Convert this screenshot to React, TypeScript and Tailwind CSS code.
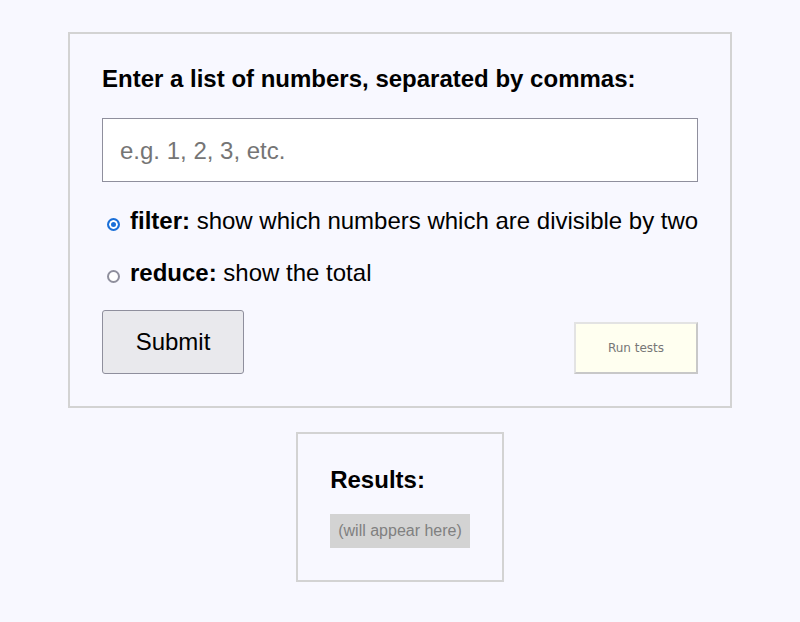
import { useState } from "react";

export default function App() {
  const [mode, setMode] = useState("filter");

  return (
    <div className="min-h-[622px] bg-[#f8f8ff] pt-8 font-['Liberation_Sans',Arial,sans-serif] text-black">
      <div className="mx-auto w-[664px] border-2 border-[#d3d3d3] p-8">
        <h2 className="text-2xl leading-[26px] font-bold">
          Enter a list of numbers, separated by commas:
        </h2>
        <input
          type="text"
          placeholder="e.g. 1, 2, 3, etc."
          className="mt-[26px] block h-16 w-full border border-[#8f8f9d] bg-white px-[17px] pt-[2px] text-2xl placeholder:text-[#757575] outline-none"
        />
        <div className="mt-[25px] flex items-start text-2xl leading-[28px]">
          <input
            type="radio"
            name="mode"
            checked={mode === "filter"}
            onChange={() => setMode("filter")}
            className="mt-[11px] mr-[3px] ml-[5px] size-[13px] shrink-0 appearance-none rounded-full border-2 border-[#8f8f9d] bg-white checked:border-[#1a6fd8] checked:bg-[#1a6fd8] checked:shadow-[inset_0_0_0_2px_white]"
          />
          <label className="ml-[7px] shrink-0 whitespace-nowrap">
            <b>filter:</b> show which numbers which are divisible by two
          </label>
        </div>
        <div className="mt-[24px] flex items-start text-2xl leading-[28px]">
          <input
            type="radio"
            name="mode"
            checked={mode === "reduce"}
            onChange={() => setMode("reduce")}
            className="mt-[11px] mr-[3px] ml-[5px] size-[13px] shrink-0 appearance-none rounded-full border-2 border-[#8f8f9d] bg-white checked:border-[#1a6fd8] checked:bg-[#1a6fd8] checked:shadow-[inset_0_0_0_2px_white]"
          />
          <label className="ml-[7px] shrink-0 whitespace-nowrap">
            <b>reduce:</b> show the total
          </label>
        </div>
        <div className="mt-[23px] flex items-end justify-between">
          <button className="h-16 w-[142px] rounded-[3px] border border-[#8f8f9d] bg-[#e9e9ed] text-2xl">
            Submit
          </button>
          <button className="h-[52px] w-[124px] border-2 border-t-[#e3e3e3] border-l-[#e3e3e3] border-r-[#c8c8c8] border-b-[#c8c8c8] bg-[#fffff0] font-['DejaVu_Sans',sans-serif] text-xs text-[#777777]">
            Run tests
          </button>
        </div>
      </div>

      <div className="mx-auto mt-6 w-fit border-2 border-[#d3d3d3] p-8">
        <h2 className="text-2xl leading-[27px] font-bold">Results:</h2>
        <div className="mt-[21px] inline-block bg-[#d3d3d3] px-2 py-2 text-base leading-[18px] text-[#808080]">
          (will appear here)
        </div>
      </div>
    </div>
  );
}
